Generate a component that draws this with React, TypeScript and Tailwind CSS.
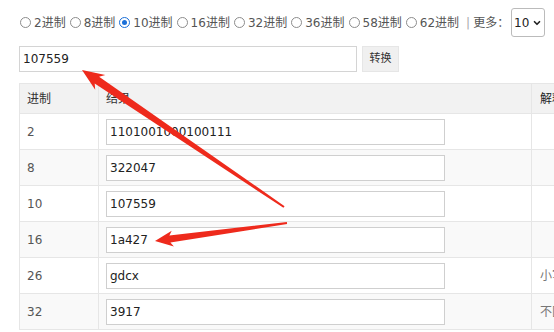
import { ChevronDown } from 'lucide-react'

const BASES = ['2', '8', '10', '16', '32', '36', '58', '62']

const ROWS = [
  { base: '2', value: '1101001000100111', note: '' },
  { base: '8', value: '322047', note: '' },
  { base: '10', value: '107559', note: '' },
  { base: '16', value: '1a427', note: '' },
  { base: '26', value: 'gdcx', note: '小写字母' },
  { base: '32', value: '3917', note: '不区分大小写' },
]

function Radio({ checked }: { checked?: boolean }) {
  return (
    <span
      className={`w-[11px] h-[11px] rounded-full border flex items-center justify-center shrink-0 ${
        checked ? 'border-[#1a6fd8] bg-white' : 'border-[#8c8c8c] bg-white'
      }`}
    >
      {checked && <span className="w-[5px] h-[5px] rounded-full bg-[#1a6fd8]" />}
    </span>
  )
}

export default function App() {
  return (
    <div
      className="relative w-[554px] h-[332px] overflow-hidden bg-white text-[#333]"
      style={{ fontFamily: '"DejaVu Sans", "Noto Sans CJK SC", sans-serif' }}
    >
      {/* base picker */}
      <div className="flex items-center h-[29px] mt-[8px] pl-[20px] text-[12px] text-[#555]">
        {BASES.map(b => (
          <div key={b} className="flex items-center mr-[4px]">
            <Radio checked={b === '10'} />
            <span className="ml-[3px]">{b}进制</span>
          </div>
        ))}
        <span className="text-[#aaa] mx-[3px]">|</span>
        <span>更多：</span>
        <div className="ml-[2px] h-[29px] w-[34px] border border-[#bbb] rounded-[3px] flex items-center justify-center gap-[3px] text-[#222]">
          10 <ChevronDown className="w-[10px] h-[10px]" strokeWidth={4} />
        </div>
      </div>

      {/* input row */}
      <div className="flex items-center mt-[9px] pl-[19px]">
        <div className="w-[338px] h-[26px] border border-[#d4d4d4] flex items-center pl-[3px] text-[12px] text-[#222]">
          107559
        </div>
        <div className="ml-[5px] w-[37px] h-[26px] bg-[#f0f0f0] border border-[#e6e6e6] flex items-center justify-center text-[11px] text-[#333]">
          转换
        </div>
      </div>

      {/* result table */}
      <table className="mt-[11px] ml-[19px] w-[700px] table-fixed border-collapse text-[12px]">
        <colgroup>
          <col className="w-[79px]" />
          <col className="w-[433px]" />
          <col />
        </colgroup>
        <thead>
          <tr className="h-[30px] bg-[#f2f2f2]">
            <th className="border border-[#e6e6e6] text-left font-normal pl-[7px]">进制</th>
            <th className="border border-[#e6e6e6] text-left font-normal pl-[7px]">结果</th>
            <th className="border border-[#e6e6e6] text-left font-normal pl-[8px] text-[#222]">解释说明</th>
          </tr>
        </thead>
        <tbody>
          {ROWS.map((r, i) => (
            <tr key={r.base} className={`h-[36px] ${i % 2 === 1 ? 'bg-[#f9f9f9]' : 'bg-white'}`}>
              <td className="border border-[#e6e6e6] pl-[7px] text-[#555]">{r.base}</td>
              <td className="border border-[#e6e6e6] pl-[7px]">
                <div className="w-[339px] h-[26px] border border-[#cfcfcf] bg-white flex items-center pl-[3px] text-[#222]">
                  {r.value}
                </div>
              </td>
              <td className="border border-[#e6e6e6] pl-[8px] text-[#777] whitespace-nowrap">{r.note}</td>
            </tr>
          ))}
        </tbody>
      </table>

      {/* annotation arrows */}
      <svg className="absolute inset-0 pointer-events-none" width="554" height="332" viewBox="0 0 554 332">
        <polygon
          fill="#ee2a1c"
          points="82,70 105.3,74.9 99.1,76.8 284.6,206.2 283.4,207.8 94.7,83.4 95.2,89.8"
        />
        <polygon
          fill="#ee2a1c"
          points="155,241 171.7,230.7 169.4,235.5 286.9,222 287.1,224 170.4,242.5 173.9,246.5"
        />
      </svg>
    </div>
  )
}
